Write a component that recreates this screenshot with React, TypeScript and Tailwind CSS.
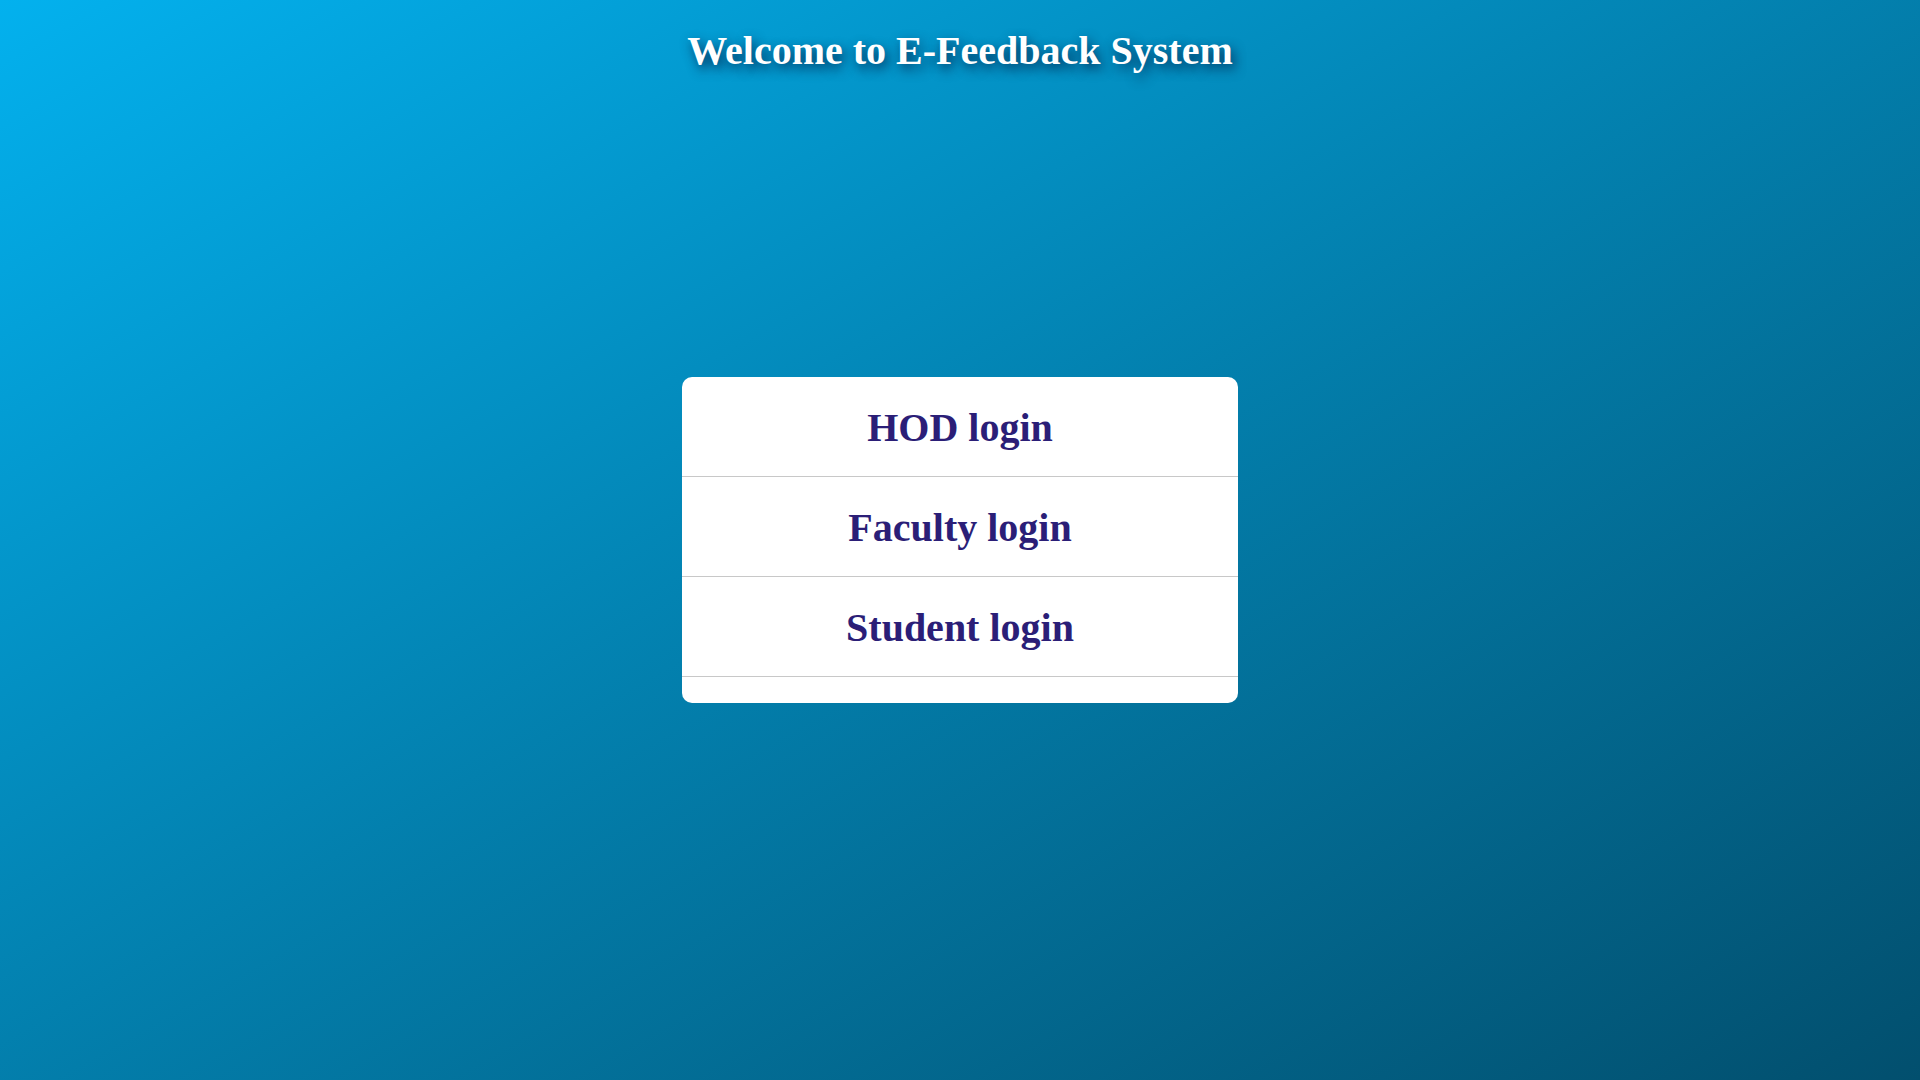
const logins = ["HOD login", "Faculty login", "Student login"]

export default function App() {
  return (
    <div className="min-h-screen w-full bg-linear-to-br from-[#03b1ee] to-[#024f6e] font-['Liberation_Serif',serif]">
      <div className="flex flex-col items-center">
        <h1 className="mt-[28px] text-[40px] leading-[46px] font-bold text-white [text-shadow:3px_5px_12px_rgba(0,30,70,0.85)]">
          Welcome to E-Feedback System
        </h1>

        <div className="mt-[303px] w-[556px] rounded-[10px] bg-white pb-[26px]">
          {logins.map((label) => (
            <a
              key={label}
              href="#"
              className="flex h-[100px] items-center justify-center border-b border-[#c8c8c8] pt-[2px] text-[40px] font-bold text-[#2b1e77]"
            >
              {label}
            </a>
          ))}
        </div>
      </div>
    </div>
  )
}
